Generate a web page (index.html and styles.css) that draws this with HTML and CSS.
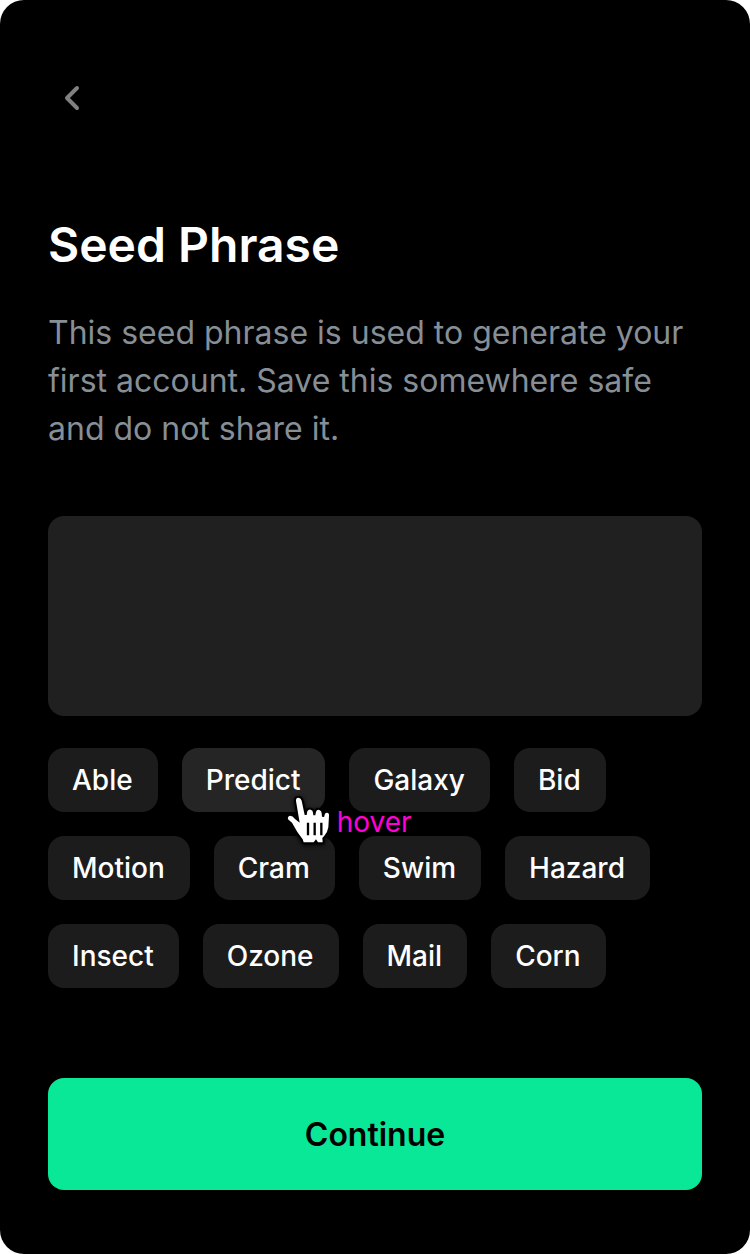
FILE: index.html
```html
<!DOCTYPE html>
<html lang="en">
<head>
<meta charset="utf-8">
<meta name="viewport" content="width=device-width, initial-scale=1">
<title>Seed Phrase</title>
<link rel="stylesheet" href="styles.css">
</head>
<body>
<main class="screen">
  <button class="back" type="button" aria-label="Back">
    <svg width="48" height="48" viewBox="0 0 48 48" fill="none" stroke="#808080" stroke-width="4" stroke-linecap="round" stroke-linejoin="round"><path d="M29 14 19 24l10 10"/></svg>
  </button>
  <h1 class="title">Seed Phrase</h1>
  <p class="intro">This seed phrase is used to generate your first account. Save this somewhere safe and do not share it.</p>
  <textarea class="phrase" aria-label="Seed phrase" readonly></textarea>
  <ul class="words">
    <li><button class="chip" type="button">Able</button></li>
    <li class="hovered"><button class="chip chip-active" type="button">Predict</button>
      <span class="pointer">
        <svg width="50" height="60" viewBox="0 0 150 180" aria-hidden="true">
          <path class="hand" d="M36 33Q35 23 44 23Q51 24 53 32L62 75L68 75L70 64Q73 58 80 59Q87 61 87 68L88 76L94 76L96 65Q99 58 106 60Q113 62 113 70L114 80L120 81L123 71Q127 66 132 69Q136 71 135 78L133 112Q131 127 121 137L115 144L116 157L102 157L96 148L89 157L59 157L56 148L40 126L24 98L12 88Q10 79 18 77Q26 77 33 87L47 98Z"/>
          <path d="M72 98v38M92 98v38M112 98v38" stroke="#000" stroke-width="7"/>
        </svg>
        <span class="state">hover</span>
      </span>
    </li>
    <li><button class="chip" type="button">Galaxy</button></li>
    <li><button class="chip" type="button">Bid</button></li>
    <li><button class="chip" type="button">Motion</button></li>
    <li><button class="chip" type="button">Cram</button></li>
    <li><button class="chip" type="button">Swim</button></li>
    <li><button class="chip" type="button">Hazard</button></li>
    <li><button class="chip" type="button">Insect</button></li>
    <li><button class="chip" type="button">Ozone</button></li>
    <li><button class="chip" type="button">Mail</button></li>
    <li><button class="chip" type="button">Corn</button></li>
  </ul>
  <button class="continue" type="button">Continue</button>
</main>
</body>
</html>
```

FILE: styles.css
```css
* { box-sizing: border-box; }
body { margin: 0; background: #fff; font-family: Inter, "Liberation Sans", sans-serif; }
button { border: 0; font-family: inherit; cursor: pointer; }
.screen {
  display: flex;
  flex-direction: column;
  min-height: 100vh;
  padding: 74px 48px 64px;
  background: #000;
  border-radius: 24px;
}
.back { align-self: flex-start; padding: 0; background: none; }
.back svg { display: block; }
.title { margin: 93px 0 0; color: #fff; font-size: 48px; font-weight: 600; line-height: 60px; }
.intro { margin: 34px 0 0; color: #868e96; font-size: 32px; line-height: 48px; }
.phrase {
  display: block;
  width: 100%;
  height: 200px;
  margin: 63px 0 0;
  padding: 24px;
  border: 0;
  border-radius: 16px;
  background: #202020;
  color: #fff;
  font: inherit;
  resize: none;
}
.words { display: flex; flex-wrap: wrap; gap: 24px; margin: 32px 0 90px; padding: 0; list-style: none; }
.chip {
  display: block;
  height: 64px;
  padding: 0 25px 0 24px;
  border-radius: 16px;
  background: #1c1c1c;
  color: #fff;
  font-size: 28px;
  font-weight: 500;
  line-height: 64px;
}
.chip-active { background: #252525; }
.hovered { position: relative; }
.pointer { position: absolute; z-index: 1; top: 42px; left: 102px; display: flex; align-items: center; gap: 3px; }
.hand { fill: #fff; stroke: #000; stroke-width: 12px; stroke-linejoin: round; paint-order: stroke; }
.pointer svg { filter: drop-shadow(0 1px 2px #000); }
.state { padding-top: 4px; color: #ff00d6; font-size: 28px; line-height: 34px; }
.continue {
  width: 100%;
  height: 112px;
  margin-top: auto;
  border-radius: 16px;
  background: #08e896;
  color: #000;
  font-size: 32px;
  font-weight: 600;
}
```
